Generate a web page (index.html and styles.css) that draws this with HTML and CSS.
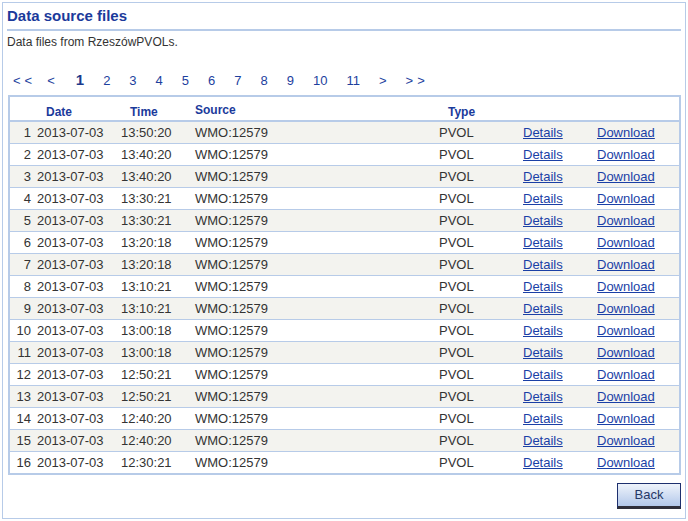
FILE: index.html
```html
<!DOCTYPE html>
<html>
<head>
<meta charset="utf-8">
<title>Data source files</title>
<link rel="stylesheet" href="styles.css">
</head>
<body>
<div class="panel">
  <h1 class="title">Data source files</h1>
  <p class="intro">Data files from RzeszówPVOLs.</p>
  <div class="pager">
    <a class="pg pg-first">&lt;&lt;</a>
    <a class="pg">&lt;</a>
    <a class="pg current">1</a>
    <a class="pg">2</a>
    <a class="pg">3</a>
    <a class="pg">4</a>
    <a class="pg">5</a>
    <a class="pg">6</a>
    <a class="pg">7</a>
    <a class="pg">8</a>
    <a class="pg">9</a>
    <a class="pg">10</a>
    <a class="pg">11</a>
    <a class="pg">&gt;</a>
    <a class="pg pg-last">&gt;&gt;</a>
  </div>
  <table class="files">
    <colgroup>
      <col class="c-num"><col class="c-date"><col class="c-time"><col class="c-src"><col class="c-type"><col class="c-det"><col class="c-dl">
    </colgroup>
    <thead>
      <tr>
        <th></th>
        <th class="h-date">Date</th>
        <th class="h-time">Time</th>
        <th class="h-src">Source</th>
        <th class="h-type">Type</th>
        <th></th>
        <th></th>
      </tr>
    </thead>
    <tbody>
      <tr><td class="num">1</td><td class="date">2013-07-03</td><td class="time">13:50:20</td><td class="src">WMO:12579</td><td class="type">PVOL</td><td class="det"><a href="#">Details</a></td><td class="dl"><a href="#">Download</a></td></tr>
      <tr><td class="num">2</td><td class="date">2013-07-03</td><td class="time">13:40:20</td><td class="src">WMO:12579</td><td class="type">PVOL</td><td class="det"><a href="#">Details</a></td><td class="dl"><a href="#">Download</a></td></tr>
      <tr><td class="num">3</td><td class="date">2013-07-03</td><td class="time">13:40:20</td><td class="src">WMO:12579</td><td class="type">PVOL</td><td class="det"><a href="#">Details</a></td><td class="dl"><a href="#">Download</a></td></tr>
      <tr><td class="num">4</td><td class="date">2013-07-03</td><td class="time">13:30:21</td><td class="src">WMO:12579</td><td class="type">PVOL</td><td class="det"><a href="#">Details</a></td><td class="dl"><a href="#">Download</a></td></tr>
      <tr><td class="num">5</td><td class="date">2013-07-03</td><td class="time">13:30:21</td><td class="src">WMO:12579</td><td class="type">PVOL</td><td class="det"><a href="#">Details</a></td><td class="dl"><a href="#">Download</a></td></tr>
      <tr><td class="num">6</td><td class="date">2013-07-03</td><td class="time">13:20:18</td><td class="src">WMO:12579</td><td class="type">PVOL</td><td class="det"><a href="#">Details</a></td><td class="dl"><a href="#">Download</a></td></tr>
      <tr><td class="num">7</td><td class="date">2013-07-03</td><td class="time">13:20:18</td><td class="src">WMO:12579</td><td class="type">PVOL</td><td class="det"><a href="#">Details</a></td><td class="dl"><a href="#">Download</a></td></tr>
      <tr><td class="num">8</td><td class="date">2013-07-03</td><td class="time">13:10:21</td><td class="src">WMO:12579</td><td class="type">PVOL</td><td class="det"><a href="#">Details</a></td><td class="dl"><a href="#">Download</a></td></tr>
      <tr><td class="num">9</td><td class="date">2013-07-03</td><td class="time">13:10:21</td><td class="src">WMO:12579</td><td class="type">PVOL</td><td class="det"><a href="#">Details</a></td><td class="dl"><a href="#">Download</a></td></tr>
      <tr><td class="num">10</td><td class="date">2013-07-03</td><td class="time">13:00:18</td><td class="src">WMO:12579</td><td class="type">PVOL</td><td class="det"><a href="#">Details</a></td><td class="dl"><a href="#">Download</a></td></tr>
      <tr><td class="num">11</td><td class="date">2013-07-03</td><td class="time">13:00:18</td><td class="src">WMO:12579</td><td class="type">PVOL</td><td class="det"><a href="#">Details</a></td><td class="dl"><a href="#">Download</a></td></tr>
      <tr><td class="num">12</td><td class="date">2013-07-03</td><td class="time">12:50:21</td><td class="src">WMO:12579</td><td class="type">PVOL</td><td class="det"><a href="#">Details</a></td><td class="dl"><a href="#">Download</a></td></tr>
      <tr><td class="num">13</td><td class="date">2013-07-03</td><td class="time">12:50:21</td><td class="src">WMO:12579</td><td class="type">PVOL</td><td class="det"><a href="#">Details</a></td><td class="dl"><a href="#">Download</a></td></tr>
      <tr><td class="num">14</td><td class="date">2013-07-03</td><td class="time">12:40:20</td><td class="src">WMO:12579</td><td class="type">PVOL</td><td class="det"><a href="#">Details</a></td><td class="dl"><a href="#">Download</a></td></tr>
      <tr><td class="num">15</td><td class="date">2013-07-03</td><td class="time">12:40:20</td><td class="src">WMO:12579</td><td class="type">PVOL</td><td class="det"><a href="#">Details</a></td><td class="dl"><a href="#">Download</a></td></tr>
      <tr><td class="num">16</td><td class="date">2013-07-03</td><td class="time">12:30:21</td><td class="src">WMO:12579</td><td class="type">PVOL</td><td class="det"><a href="#">Details</a></td><td class="dl"><a href="#">Download</a></td></tr>
    </tbody>
  </table>
  <div class="actions">
    <button class="back" type="button">Back</button>
  </div>
</div>
</body>
</html>
```

FILE: styles.css
```css
html, body {
  height: 100%;
}
body {
  margin: 2px;
  font-family: "Liberation Sans", Arial, sans-serif;
  background: #ffffff;
  color: #333333;
}
.panel {
  box-sizing: border-box;
  height: calc(100vh - 4px);
  border: 1px solid #b7cbe8;
  padding: 0 4px;
}
.title {
  margin: 0;
  padding: 4px 0 4px;
  font-size: 15px;
  line-height: 18px;
  font-weight: bold;
  color: #1b3a9b;
  border-bottom: 2px solid #b7cbe8;
}
.intro {
  margin: 4px 0 0;
  font-size: 12px;
  line-height: 14px;
  color: #333333;
}
.pager {
  margin-top: 23px;
  padding-left: 6px;
  display: flex;
  align-items: baseline;
  gap: 19px;
  font-size: 13px;
  line-height: 16px;
}
.pg {
  color: #1d3f9e;
  text-decoration: none;
}
.pg-first {
  letter-spacing: 4px;
  margin-right: -8px;
}
.pg-last {
  letter-spacing: 4px;
}
.pg.current {
  margin-left: 2px;
  font-size: 15px;
  font-weight: bold;
  color: #1b3a8c;
}
.files {
  margin: 6px 0 0 1px;
  width: calc(100% - 1px);
  table-layout: fixed;
  border-collapse: separate;
  border-spacing: 0;
  border: 2px solid #b7cbe8;
  font-size: 13px;
}
.c-num { width: 25px; }
.c-date { width: 82px; }
.c-time { width: 74px; }
.c-src { width: 229px; }
.c-type { width: 74px; }
.c-det { width: 84px; }
.c-dl { width: 101px; }
.files th {
  height: 22px;
  padding: 0 0 1px;
  vertical-align: bottom;
  text-align: left;
  font-size: 12px;
  line-height: 14px;
  font-weight: bold;
  color: #1b3a9b;
  border-bottom: 2px solid #b7cbe8;
  white-space: nowrap;
}
.files th.h-date { padding-left: 11px; }
.files th.h-time { padding-left: 13px; }
.files th.h-src { padding-left: 4px; padding-bottom: 3px; height: 20px; }
.files th.h-type { padding-left: 28px; }
.files td {
  height: 20px;
  padding: 1px 0 0;
  line-height: 20px;
  color: #333333;
  border-bottom: 1px solid #b7cbe8;
  white-space: nowrap;
  text-align: left;
}
.files tbody tr:nth-child(odd) td {
  background: #f3f3ef;
}
.files tbody tr:last-child td {
  border-bottom: none;
}
.files td.num { text-align: right; padding-right: 4px; }
.files td.date { padding-left: 2px; }
.files td.time { padding-left: 4px; }
.files td.src { padding-left: 4px; }
.files td.type { padding-left: 19px; }
.files td.det { padding-left: 29px; }
.files td.dl { padding-left: 19px; }
.files td a {
  color: #1a3fa6;
  text-decoration: underline;
}
.actions {
  display: flex;
  justify-content: flex-end;
  margin-top: 8px;
}
.back {
  box-sizing: border-box;
  width: 64px;
  height: 26px;
  padding: 0 0 1px;
  border: 1px solid #1d2f6e;
  border-bottom: 3px solid #2f2f3a;
  background: linear-gradient(#eef3fb, #b3c8ea);
  font-family: "Liberation Sans", Arial, sans-serif;
  font-size: 13px;
  color: #263866;
  cursor: pointer;
}
```
